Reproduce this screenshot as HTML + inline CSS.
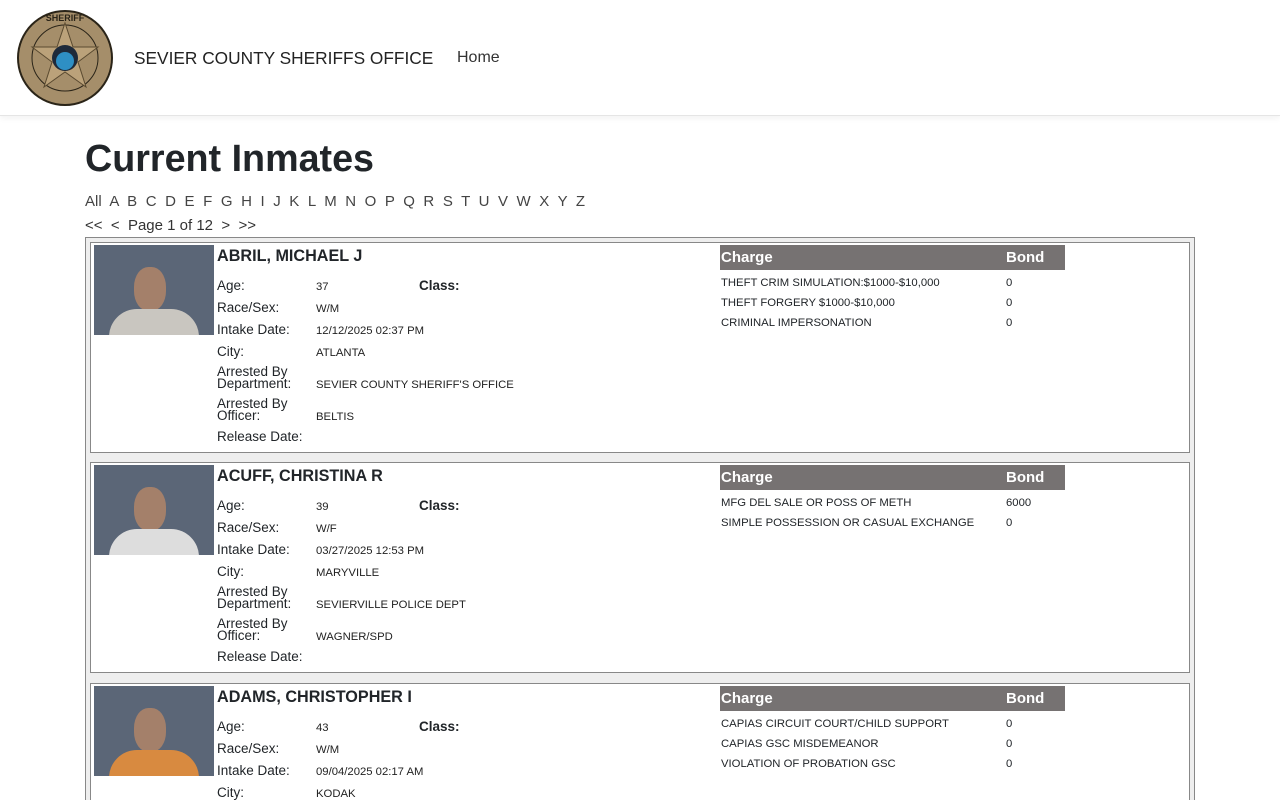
<!DOCTYPE html>
<html><head><meta charset="utf-8"><style>
*{box-sizing:border-box;margin:0;padding:0}
html,body{width:1280px;height:800px;overflow:hidden}
body{background:#fff;font-family:"Liberation Sans",sans-serif;color:#212529;position:relative}
.hdr{position:absolute;left:0;top:0;width:1280px;height:116px;border-bottom:1px solid #e5e5e5;box-shadow:0 2px 6px rgba(0,0,0,.06)}
.brand{position:absolute;left:134px;top:48px;font-size:17.3px;color:#222}
.home{position:absolute;left:457px;top:49px;font-size:16px;color:#333}
h1{position:absolute;left:85px;top:137px;font-size:37.7px;font-weight:bold;color:#212529}
.letters{position:absolute;left:85px;top:193px;font-size:15px;color:#444;word-spacing:4.4px}
.pg{position:absolute;left:85px;top:217px;font-size:15px;color:#333}
.outer{position:absolute;left:85px;top:237px;width:1110px;height:580px;border:1px solid #888;background:#eee;overflow:hidden}
.card{position:absolute;left:4px;width:1100px;height:211px;border:1px solid #888;background:#fff}
.ph{position:absolute;left:3px;top:2px;width:120px;height:90px;background:#5b6677;overflow:hidden}
.ph i{position:absolute;left:40px;top:22px;width:32px;height:44px;border-radius:45%;background:#a4806a}
.ph b{position:absolute;left:15px;top:64px;width:90px;height:28px;border-radius:40px 40px 0 0;background:#c9c6c0}
.nm{position:absolute;left:126px;top:4px;font-size:16.2px;font-weight:bold}
.l{position:absolute;left:126px;font-size:13.5px;line-height:12px}
.v{position:absolute;left:225px;font-size:11.3px;color:#222;margin-top:2px}
.cl{position:absolute;left:328px;top:35px;font-size:13.5px;font-weight:bold}
.th{position:absolute;left:629px;top:2px;width:345px;height:25px;background:#767272;color:#fff;font-weight:bold;font-size:15px}
.th span{position:absolute;top:4px}
.cr{position:absolute;left:630px;font-size:11.3px;margin-top:2px}
.bd{position:absolute;left:915px;font-size:11.3px;margin-top:2px}
</style></head><body>
<div class="hdr">
<svg style="position:absolute;left:16px;top:9px" width="98" height="98" viewBox="0 0 98 98">
<circle cx="49" cy="49" r="48" fill="#2a2418"/><circle cx="49" cy="49" r="46" fill="#a58e6a"/><circle cx="49" cy="49" r="33" fill="none" stroke="#2a2418" stroke-width="1"/>
<polygon points="49,14 57,38 82,38 62,53 70,78 49,63 28,78 36,53 16,38 41,38" fill="#bba27a" stroke="#5a4a30" stroke-width="1"/>
<circle cx="49" cy="49" r="13" fill="#1e2a3a"/><circle cx="49" cy="52" r="9" fill="#2e8fc4"/>
<text x="49" y="12" font-size="9" font-weight="bold" text-anchor="middle" fill="#2a2418">SHERIFF</text>
</svg>
<div class="brand">SEVIER COUNTY SHERIFFS OFFICE</div>
<div class="home">Home</div>
</div>
<h1>Current Inmates</h1>
<div class="letters">All A B C D E F G H I J K L M N O P Q R S T U V W X Y Z</div>
<div class="pg">&lt;&lt;&nbsp; &lt;&nbsp; Page 1 of 12&nbsp; &gt;&nbsp; &gt;&gt;</div>
<div class="outer">
<div class="card" style="top:4px">
<div class="ph"><i></i><b></b></div>
<div class="nm">ABRIL, MICHAEL J</div>
<div class="l" style="top:37px">Age:</div><div class="v" style="top:36px">37</div><div class="cl">Class:</div>
<div class="l" style="top:59px">Race/Sex:</div><div class="v" style="top:58px">W/M</div>
<div class="l" style="top:81px">Intake Date:</div><div class="v" style="top:80px">12/12/2025 02:37 PM</div>
<div class="l" style="top:103px">City:</div><div class="v" style="top:102px">ATLANTA</div>
<div class="l" style="top:123px">Arrested By<br>Department:</div><div class="v" style="top:134px">SEVIER COUNTY SHERIFF'S OFFICE</div>
<div class="l" style="top:155px">Arrested By<br>Officer:</div><div class="v" style="top:166px">BELTIS</div>
<div class="l" style="top:188px">Release Date:</div>
<div class="th"><span style="left:1px">Charge</span><span style="left:286px">Bond</span></div>
<div class="cr" style="top:32px">THEFT CRIM SIMULATION:$1000-$10,000</div><div class="bd" style="top:32px">0</div>
<div class="cr" style="top:52px">THEFT FORGERY $1000-$10,000</div><div class="bd" style="top:52px">0</div>
<div class="cr" style="top:72px">CRIMINAL IMPERSONATION</div><div class="bd" style="top:72px">0</div>
</div>
<div class="card" style="top:224px">
<div class="ph"><i></i><b style="background:#ddd"></b></div>
<div class="nm">ACUFF, CHRISTINA R</div>
<div class="l" style="top:37px">Age:</div><div class="v" style="top:36px">39</div><div class="cl">Class:</div>
<div class="l" style="top:59px">Race/Sex:</div><div class="v" style="top:58px">W/F</div>
<div class="l" style="top:81px">Intake Date:</div><div class="v" style="top:80px">03/27/2025 12:53 PM</div>
<div class="l" style="top:103px">City:</div><div class="v" style="top:102px">MARYVILLE</div>
<div class="l" style="top:123px">Arrested By<br>Department:</div><div class="v" style="top:134px">SEVIERVILLE POLICE DEPT</div>
<div class="l" style="top:155px">Arrested By<br>Officer:</div><div class="v" style="top:166px">WAGNER/SPD</div>
<div class="l" style="top:188px">Release Date:</div>
<div class="th"><span style="left:1px">Charge</span><span style="left:286px">Bond</span></div>
<div class="cr" style="top:32px">MFG DEL SALE OR POSS OF METH</div><div class="bd" style="top:32px">6000</div>
<div class="cr" style="top:52px">SIMPLE POSSESSION OR CASUAL EXCHANGE</div><div class="bd" style="top:52px">0</div>
</div>
<div class="card" style="top:445px">
<div class="ph"><i></i><b style="background:#d88a40"></b></div>
<div class="nm">ADAMS, CHRISTOPHER I</div>
<div class="l" style="top:37px">Age:</div><div class="v" style="top:36px">43</div><div class="cl">Class:</div>
<div class="l" style="top:59px">Race/Sex:</div><div class="v" style="top:58px">W/M</div>
<div class="l" style="top:81px">Intake Date:</div><div class="v" style="top:80px">09/04/2025 02:17 AM</div>
<div class="l" style="top:103px">City:</div><div class="v" style="top:102px">KODAK</div>
<div class="th"><span style="left:1px">Charge</span><span style="left:286px">Bond</span></div>
<div class="cr" style="top:32px">CAPIAS CIRCUIT COURT/CHILD SUPPORT</div><div class="bd" style="top:32px">0</div>
<div class="cr" style="top:52px">CAPIAS GSC MISDEMEANOR</div><div class="bd" style="top:52px">0</div>
<div class="cr" style="top:72px">VIOLATION OF PROBATION GSC</div><div class="bd" style="top:72px">0</div>
</div>
</div>
</body></html>
